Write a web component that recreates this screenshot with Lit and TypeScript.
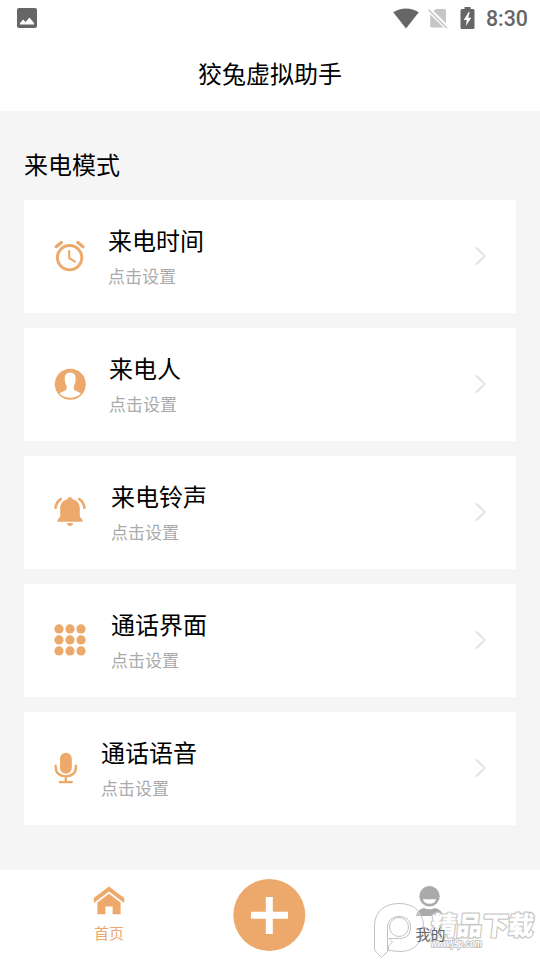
import { LitElement, html, css, svg } from "lit";
import { customElement, property } from "lit/decorators.js";

const ICONS: Record<string, { width: number; art: unknown }> = {
  alarm: {
    width: 30,
    art: svg`<g fill="none" stroke="#eda96c" stroke-linecap="round">
      <circle cx="15.6" cy="17.6" r="12.2" stroke-width="3"/>
      <path d="M15.2 11V18L20.8 21.700" stroke-width="2.1" stroke-linejoin="round"/>
      <path d="M2.200 6.700L7.400 2.500M23.800 2.500L29 6.700" stroke-width="3.300"/></g>`,
  },
  person: {
    width: 31,
    art: svg`<circle cx="16.3" cy="16.3" r="15.5" fill="#eda96c"/>
      <path fill="#fff" d="M16.2 4.600C12.4 4.600 10.400 7.400 10.800 11.200C10.900 14.400 11.600 16.200 12.600 18.100V21C12 22.800 7.400 23.300 5.600 25.800C11.200 31 21.200 31 26.800 25.800C25 23.300 20.400 22.800 19.800 21V18.100C20.800 16.200 21.500 14.400 21.600 11.200C22 7.400 20 4.600 16.2 4.600Z"/>`,
  },
  bell: {
    width: 33,
    art: svg`<path fill="#eda96c" d="M16 1.200C17.500 1.200 18.400 2 18.600 3.200C23 4.200 25.800 7.500 25.800 12V20.800L28.600 24V25.800H3.400V24L6.200 20.800V12C6.200 7.500 9 4.200 13.400 3.200C13.600 2 14.500 1.200 16 1.200ZM12.900 27H19.100C18.800 29 17.700 30 16 30S13.200 29 12.900 27Z"/>
      <path fill="none" stroke="#eda96c" stroke-width="2.600" stroke-linecap="round" d="M6.800 3.200C3.700 5.200 2 8 1.600 11.800M25.200 3.200C28.300 5.200 30 8 30.400 11.800"/>`,
  },
  grid: {
    width: 33,
    art: svg`<g fill="#eda96c">${[4.9, 15.9, 26.9].map((cy) =>
      [5, 16, 27].map((cx) => svg`<circle cx=${cx} cy=${cy} r="4.6"/>`))}</g>`,
  },
  mic: {
    width: 23,
    art: svg`<rect x="6" y=".8" width="11.8" height="21" rx="5.900" fill="#eda96c"/>
      <path d="M1.700 13.800V15.400C1.700 21 6 24.400 11.800 24.400S21.900 21 21.900 15.400V13.800M11.800 25V30M5.800 30.100H17.800" fill="none" stroke="#eda96c" stroke-width="2.400" stroke-linecap="round"/>`,
  },
};

@customElement("setting-card")
class SettingCard extends LitElement {
  @property() icon = "alarm";
  @property() heading = "";

  static styles = css`
    :host { display: flex; align-items: center; height: 113px; background: #fff; padding: 0 29px 2px 30px; box-sizing: border-box; }
    .icon { display: block; height: 32px; overflow: visible; flex: none; }
    .text { margin-left: 24px; flex: 1; }
    .heading { font-size: 24px; line-height: 36px; color: #000; }
    .hint { font-size: 17px; line-height: 26px; margin-top: 5px; color: #aaa; }
    .arrow { width: 13px; height: 20px; display: block; }
  `;

  render() {
    const { width, art } = ICONS[this.icon];
    return html`
      <svg class="icon" width=${width} viewBox="0 0 ${width} 32">${art}</svg>
      <div class="text">
        <div class="heading">${this.heading}</div>
        <div class="hint">点击设置</div>
      </div>
      <svg class="arrow" viewBox="0 0 13 20"><path d="M2 1.500L10.600 10L2 18.500" fill="none" stroke="#e2e2e2" stroke-width="2"/></svg>
    `;
  }
}

@customElement("app-root")
class AppRoot extends LitElement {
  static styles = css`
    :host { position: relative; display: flex; flex-direction: column; width: 540px; height: 960px; overflow: hidden; background: #f5f5f5; font-family: "Noto Sans CJK SC", sans-serif; }
    .status { display: flex; align-items: center; height: 36px; background: #fff; padding: 0 12px 0 17px; box-sizing: border-box; flex: none; }
    .status svg { display: block; }
    .space { flex: 1; }
    .sim { margin-left: 9px; }
    .battery { margin-left: 12px; }
    .time { margin-left: 11px; width: 42px; font: 500 21.3px/37px Roboto, sans-serif; color: #666; white-space: nowrap; padding-top: 1px; }
    .title { height: 75px; background: #fff; text-align: center; font-size: 24px; line-height: 74px; color: #000; flex: none; }
    .main { flex: 1; padding: 35px 24px 0; }
    .section { height: 36px; line-height: 36px; font-size: 24px; margin-bottom: 18px; color: #000; }
    .list { display: flex; flex-direction: column; gap: 15px; }
    .nav { height: 90px; flex: none; background: #fff; display: grid; grid-template-columns: 218px 103px 219px; justify-items: center; }
    .tab { display: flex; flex-direction: column; align-items: center; font-size: 15px; line-height: 22px; color: #eda96c; padding-top: 16px; }
    .tab svg { display: block; margin-bottom: 6px; }
    .mine { color: #666; }
    .mine svg { margin-bottom: 7px; }
    .label { position: relative; z-index: 2; }
    .add { display: block; margin-top: 9px; }
    .mark { position: absolute; left: 370px; top: 896px; }
    .brand { font: 900 26px "Noto Sans CJK SC", sans-serif; }
    .site { font: italic 700 10px "Liberation Sans", sans-serif; }
  `;

  render() {
    const cards = [
      ["alarm", "来电时间"],
      ["person", "来电人"],
      ["bell", "来电铃声"],
      ["grid", "通话界面"],
      ["mic", "通话语音"],
    ];
    return html`
      <div class="status">
        <svg width="20" height="20" viewBox="0 0 20 20"><rect width="20" height="20" rx="2" fill="#666"/><path d="M3 16.500V15L6.200 11.400L8.600 14L12.400 9.500L17 15V16.500Z" fill="#fff"/></svg>
        <div class="space"></div>
        <svg width="26" height="21" viewBox="0 0 26 21"><path d="M.2 4.300C7.500-.9 18.500-.9 25.800 4.300L13 20.500Z" fill="#666"/></svg>
        <svg class="sim" width="20" height="21" viewBox="0 0 20 21"><path d="M8 1H16.500Q18 1 18 2.500V15.300L5.500 2.900ZM2.200 6.300L15.500 19.500H3.700Q2.200 19.500 2.200 18Z" fill="#c6c6c6"/><path d="M.6 1.800L19 20.200" stroke="#c6c6c6" stroke-width="1.500"/></svg>
        <svg class="battery" width="15" height="22" viewBox="0 0 15 22"><path d="M4.500 0H10.500V2H13Q14.500 2 14.500 3.500V20.500Q14.500 22 13 22H2Q.5 22 .5 20.500V3.500Q.5 2 2 2H4.500Z" fill="#666"/><path d="M8.700 5L3.700 13H6.800L5.800 19L11.300 10.700H8.200L9.700 5Z" fill="#fff"/></svg>
        <div class="time">8:30</div>
      </div>
      <div class="title">狡兔虚拟助手</div>
      <div class="main">
        <div class="section">来电模式</div>
        <div class="list">
          ${cards.map(([icon, heading]) => html`<setting-card icon=${icon} heading=${heading}></setting-card>`)}
        </div>
      </div>
      <div class="nav">
        <div class="tab">
          <svg width="32" height="30" viewBox="0 0 32 30"><path fill="#eda96c" d="M16 .5L31.200 12V17L16 5.600L.8 17V12ZM16 7.700L27.600 16.500V28.200H19.600V20.500H12.400V28.200H4.400V16.500Z"/></svg>
          <span>首页</span>
        </div>
        <svg class="add" width="73" height="73" viewBox="0 0 73 73"><circle cx="36.300" cy="36" r="36" fill="#eda96c"/><path d="M36.300 18V55M18 36.300H55" stroke="#fff" stroke-width="7"/></svg>
        <div class="tab mine">
          <svg width="30" height="30" viewBox="0 0 30 30"><circle cx="14.500" cy="10.200" r="10.200" fill="#aaa"/><path d="M8 13.200H21C20.200 19.400 8.800 19.400 8 13.200Z" fill="#fff"/><path d="M1 30C1.500 25.500 5 23.200 9 22Q14.500 24.500 20 22C24 23.200 27.500 25.500 28 30Z" fill="#aaa"/></svg>
          <span class="label">我的</span>
        </div>
      </div>
      <svg class="mark" width="170" height="64" viewBox="0 0 170 64">
        <g fill="#fff" fill-opacity=".3" stroke="#c2c2c2" stroke-width="1" stroke-linejoin="round">
          <path fill-rule="evenodd" d="M4.500 54V29C5 15 15 7.500 29 7.500C44 7.500 53.500 16 53.500 31C53.500 46 44 55.500 30 55.500L18.500 54.500V50L22.500 46L19 42.500H29C37 42.500 40.500 38 40.500 31S36 20.500 29 20.500S17.500 25 17.500 31V55.500L11.500 61.500Z"/>
          <circle cx="29" cy="31" r="9.500"/>
        </g>
        <text class="brand" transform="translate(60 39) skewX(-6)" textLength="103" lengthAdjust="spacingAndGlyphs" fill="#fff" stroke="#c6c6c6" stroke-width="2.400" stroke-linejoin="round" paint-order="stroke">精品下载</text>
        <text class="site" x="61" y="50.500" textLength="51" lengthAdjust="spacingAndGlyphs" fill="#fff" stroke="#b4b4b4" stroke-width="1.600" paint-order="stroke">www.j9p.com</text>
      </svg>
    `;
  }
}
